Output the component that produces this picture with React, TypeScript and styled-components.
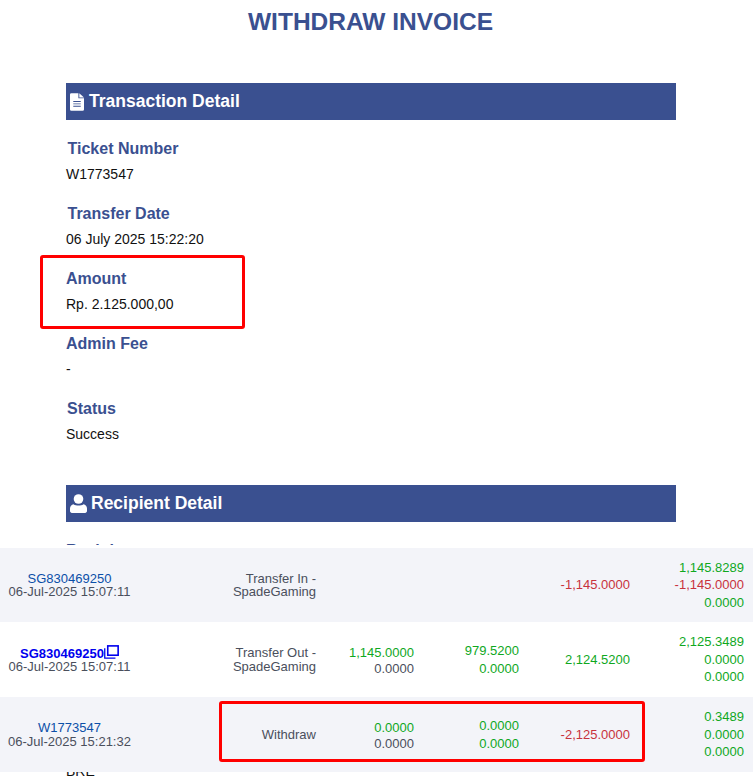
import { createGlobalStyle, styled } from "styled-components";
import { ReactNode } from "react";

const GlobalStyle = createGlobalStyle`
  html, body {
    margin: 0;
    padding: 0;
    background: #fff;
    overflow: hidden;
  }
  body {
    font-family: "Liberation Sans", Arial, sans-serif;
  }
`;

const Screen = styled.div`
  position: relative;
  width: 753px;
  height: 780px;
  overflow: hidden;
  background: #fff;
`;

const Invoice = styled.div`
  padding: 0 77px 0 66px;
`;

const Title = styled.h1`
  margin: 0 0 47px;
  padding: 7px 1px 0 0;
  height: 29px;
  line-height: 29px;
  font-size: 24.5px;
  font-weight: 700;
  text-align: center;
  color: #3a5090;
`;

const SectionBar = styled.div<{ $gap: number }>`
  display: flex;
  align-items: center;
  gap: ${(p) => p.$gap}px;
  height: 37px;
  padding-left: 4px;
  background: #3a5090;
  color: #fff;
  font-size: 17.5px;
  font-weight: 700;
  svg {
    fill: #fff;
    flex: none;
  }
`;

const Fields = styled.div`
  display: flex;
  flex-direction: column;
  padding: 19px 0 21px;
`;

const Field = styled.div`
  height: 65px;
`;

const FieldLabel = styled.div<{ $indent?: number }>`
  height: 19px;
  line-height: 19px;
  padding-left: ${(p) => p.$indent ?? 0}px;
  font-size: 16px;
  font-weight: 700;
  color: #3a5090;
`;

const FieldValue = styled.div`
  margin-top: 8px;
  height: 16px;
  line-height: 16px;
  font-size: 14px;
  color: #111;
`;

const Ledger = styled.div`
  position: absolute;
  left: 0;
  top: 545px;
  width: 753px;
  padding-top: 3px;
  background: #fff;
  display: flex;
  flex-direction: column;
  font-size: 13px;
  color: #4a4f5c;
`;

const LedgerRow = styled.div<{ $shaded?: boolean; $height: number }>`
  display: grid;
  grid-template-columns: 139px 177px 98px 105px 111px 114px;
  height: ${(p) => p.$height}px;
  align-items: center;
  background: ${(p) => (p.$shaded ? "#f3f4f9" : "#fff")};
`;

const RefCell = styled.div`
  text-align: center;
  line-height: 13.5px;
`;

const RefLink = styled.div<{ $strong?: boolean }>`
  display: flex;
  justify-content: center;
  align-items: flex-end;
  color: ${(p) => (p.$strong ? "#0000ee" : "#0b4fa8")};
  font-weight: ${(p) => (p.$strong ? 700 : 400)};
  svg {
    flex: none;
    margin-bottom: 1px;
  }
`;

const TypeCell = styled.div`
  text-align: right;
  line-height: 13.5px;
`;

const AmountCell = styled.div<{ $tight?: boolean }>`
  display: flex;
  flex-direction: column;
  align-items: flex-end;
  line-height: ${(p) => (p.$tight ? 16 : 17.5)}px;
  padding-top: ${(p) => (p.$tight ? 2 : 0)}px;
`;

const Amount = styled.span<{ $tone: "up" | "down" | "flat" }>`
  color: ${(p) =>
    p.$tone === "up" ? "#0fa81e" : p.$tone === "down" ? "#c8323c" : "#4a4f5c"};
`;

const Callout = styled.div<{ $x: number; $y: number; $w: number; $h: number }>`
  position: absolute;
  left: ${(p) => p.$x}px;
  top: ${(p) => p.$y}px;
  width: ${(p) => p.$w}px;
  height: ${(p) => p.$h}px;
  box-sizing: border-box;
  border: 3px solid #ff0000;
  border-radius: 3px;
`;

const DocIcon = () => (
  <svg width="14" height="18" viewBox="0 0 15 19">
    <path d="M1.5 0H9v5.5h6V17.5a1.5 1.5 0 0 1-1.5 1.5h-12A1.5 1.5 0 0 1 0 17.5v-16A1.5 1.5 0 0 1 1.5 0z" />
    <path d="M10 0.2 15 4.6h-5z" />
    <path d="M3.5 8.5h8v1h-8zM3.5 11h8v1h-8zM3.5 13.5h8v1h-8z" fill="#3a5090" />
  </svg>
);

const UserIcon = () => (
  <svg width="17" height="19" viewBox="0 0 17 19">
    <circle cx="8.5" cy="5" r="4.8" />
    <path d="M3.5 10.2c1.4 1 3.2 1.4 5 1.4s3.6-.4 5-1.4c2 .5 3.5 2.2 3.5 4.3v2.6c0 1-.9 1.9-1.9 1.9H1.9C.9 19 0 18.1 0 17.1v-2.6c0-2.1 1.5-3.8 3.5-4.3z" />
  </svg>
);

const CopyIcon = () => (
  <svg width="15" height="14" viewBox="0 0 14 13" fill="none" stroke="#0000ee">
    <rect x="3.5" y="0.8" width="9.7" height="8.7" strokeWidth="1.5" />
    <path d="M0.7 3v9.3h10" strokeWidth="1.2" />
  </svg>
);

type Tone = "up" | "down" | "flat";
const cell = (list: [string, Tone][], tight?: boolean) => (
  <AmountCell $tight={tight}>
    {list.map(([text, tone], i) => (
      <Amount key={i} $tone={tone}>
        {text}
      </Amount>
    ))}
  </AmountCell>
);

function DetailField({ label, value, indent }: { label: string; value: ReactNode; indent?: number }) {
  return (
    <Field>
      <FieldLabel $indent={indent}>{label}</FieldLabel>
      <FieldValue>{value}</FieldValue>
    </Field>
  );
}

export default function App() {
  return (
    <Screen>
      <GlobalStyle />
      <Invoice>
        <Title>WITHDRAW INVOICE</Title>
        <SectionBar $gap={5}>
          <DocIcon />
          Transaction Detail
        </SectionBar>
        <Fields>
          <DetailField label="Ticket Number" value="W1773547" indent={1.5} />
          <DetailField label="Transfer Date" value="06 July 2025 15:22:20" indent={1.5} />
          <DetailField label="Amount" value="Rp. 2.125.000,00" />
          <DetailField label="Admin Fee" value="-" />
          <DetailField label="Status" value="Success" indent={1} />
        </Fields>
        <SectionBar $gap={4}>
          <UserIcon />
          Recipient Detail
        </SectionBar>
        <Fields>
          <DetailField label="Recipient" value="" />
          <DetailField label="Account Name" value="" />
          <DetailField label="Account Number" value="" />
          <DetailField label="Bank" value="BRE" />
        </Fields>
      </Invoice>

      <Ledger>
        <LedgerRow $shaded $height={74}>
          <RefCell>
            <RefLink>SG830469250</RefLink>
            06-Jul-2025 15:07:11
          </RefCell>
          <TypeCell>
            Transfer In -<br />
            SpadeGaming
          </TypeCell>
          <div />
          <div />
          {cell([["-1,145.0000", "down"]])}
          {cell([
            ["1,145.8289", "up"],
            ["-1,145.0000", "down"],
            ["0.0000", "up"],
          ])}
        </LedgerRow>
        <LedgerRow $height={75}>
          <RefCell>
            <RefLink $strong>
              SG830469250
              <CopyIcon />
            </RefLink>
            06-Jul-2025 15:07:11
          </RefCell>
          <TypeCell>
            Transfer Out -<br />
            SpadeGaming
          </TypeCell>
          {cell(
            [
              ["1,145.0000", "up"],
              ["0.0000", "flat"],
            ],
            true
          )}
          {cell([
            ["979.5200", "up"],
            ["0.0000", "up"],
          ])}
          {cell([["2,124.5200", "up"]])}
          {cell([
            ["2,125.3489", "up"],
            ["0.0000", "up"],
            ["0.0000", "up"],
          ])}
        </LedgerRow>
        <LedgerRow $shaded $height={75}>
          <RefCell>
            <RefLink>W1773547</RefLink>
            06-Jul-2025 15:21:32
          </RefCell>
          <TypeCell>Withdraw</TypeCell>
          {cell(
            [
              ["0.0000", "up"],
              ["0.0000", "flat"],
            ],
            true
          )}
          {cell([
            ["0.0000", "up"],
            ["0.0000", "up"],
          ])}
          {cell([["-2,125.0000", "down"]])}
          {cell([
            ["0.3489", "up"],
            ["0.0000", "up"],
            ["0.0000", "up"],
          ])}
        </LedgerRow>
      </Ledger>

      <Callout $x={40} $y={255} $w={205} $h={74} />
      <Callout $x={219} $y={701} $w={426} $h={61} />
    </Screen>
  );
}
